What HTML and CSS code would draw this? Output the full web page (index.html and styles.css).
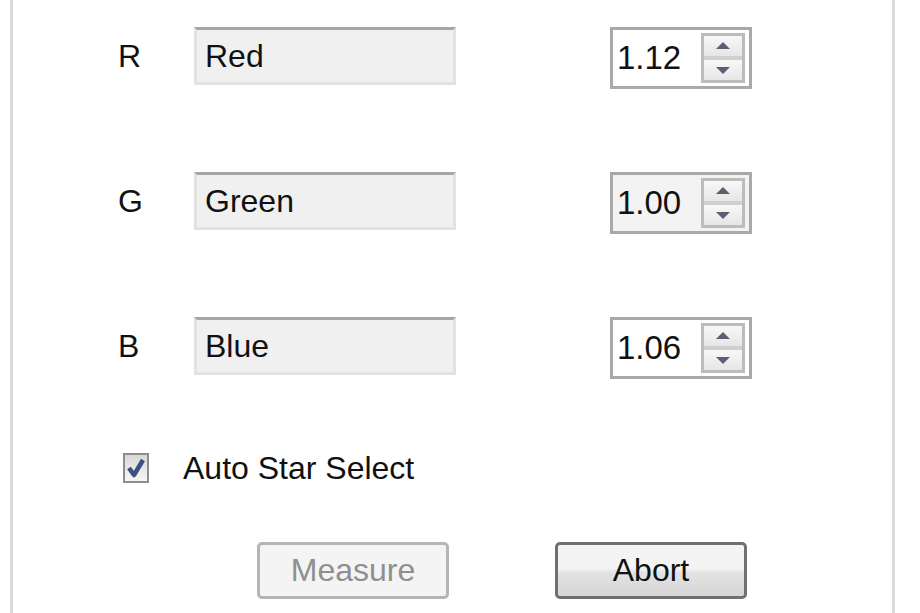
FILE: index.html
```html
<!DOCTYPE html>
<html lang="en">
<head>
  <meta charset="UTF-8" />
  <title>Color Balance</title>
  <link rel="stylesheet" href="styles.css">
</head>
<body>
  <div class="dialog">
    <!-- channel rows -->
    <div class="row">
      <span class="label">R</span>
      <div class="textbox">Red</div>
      <div class="spinner">
        <span class="value">1.12</span>
        <div class="spin"><span class="up"></span><span class="down"></span></div>
      </div>
    </div>
    <div class="row">
      <span class="label">G</span>
      <div class="textbox">Green</div>
      <div class="spinner focused">
        <span class="value">1.00</span>
        <div class="spin"><span class="up"></span><span class="down"></span></div>
      </div>
    </div>
    <div class="row">
      <span class="label">B</span>
      <div class="textbox">Blue</div>
      <div class="spinner">
        <span class="value">1.06</span>
        <div class="spin"><span class="up"></span><span class="down"></span></div>
      </div>
    </div>

    <label class="check">
      <span class="box">
        <svg width="20" height="22" viewBox="0 0 20 22"><path d="M3 11 L8 18 L17 3" fill="none" stroke="#3f4f80" stroke-width="4.5" stroke-linejoin="round"/></svg>
      </span>
      Auto Star Select
    </label>

    <div class="buttons">
      <button class="btn disabled">Measure</button>
      <button class="btn">Abort</button>
    </div>
  </div>
</body>
</html>
```

FILE: styles.css
```css
body {
  margin: 0;
  background: #ffffff;
  font-family: "Liberation Sans", Arial, sans-serif;
  font-size: 32px;
  color: #111111;
}

.dialog {
  margin-left: 10px;
  width: 885px;
  height: 613px;
  box-sizing: border-box;
  border-left: 3px solid #dadada;
  border-right: 3px solid #dadada;
  padding-top: 27px;
  overflow: hidden;
}

.row {
  display: flex;
  align-items: flex-start;
  height: 62px;
  margin-bottom: 83px;
  padding-left: 105px;
}

.label {
  width: 76px;
  height: 58px;
  line-height: 58px;
}

.textbox {
  width: 262px;
  height: 58px;
  box-sizing: border-box;
  border: 3px solid #e2e2e2;
  border-top-color: #a6a6a6;
  background: #f0f0f0;
  padding-left: 8px;
  line-height: 52px;
}

.spinner {
  margin-left: 154px;
  width: 142px;
  height: 62px;
  box-sizing: border-box;
  border: 3px solid #a9a9a9;
  background: #ffffff;
  display: flex;
  align-items: center;
  justify-content: space-between;
  padding: 0 4px 0 4px;
}

.spinner.focused {
  background: #f3f3f3;
}

.value {
  font-size: 33px;
}

.spin {
  width: 44px;
  height: 50px;
  box-sizing: border-box;
  border: 3px solid #bcbcbc;
  display: flex;
  flex-direction: column;
}

.spin span {
  flex: 1;
  position: relative;
  background: linear-gradient(#f8f8f8, #e6e6e6);
}

.spin .up {
  border-bottom: 4px solid #cfcfcf;
}

.spin span::after {
  content: "";
  position: absolute;
  left: 50%;
  top: 50%;
  margin-left: -7px;
  border-left: 7px solid transparent;
  border-right: 7px solid transparent;
}

.spin .up::after {
  margin-top: -4px;
  border-bottom: 7px solid #5a6070;
}

.spin .down::after {
  margin-top: -3px;
  border-top: 7px solid #5a6070;
}

.check {
  display: flex;
  align-items: center;
  margin-top: -10px;
  padding-left: 110px;
  height: 32px;
}

.box {
  width: 26px;
  height: 30px;
  box-sizing: border-box;
  border: 2px solid #8e8e8e;
  background: linear-gradient(#d8d8d8, #f6f6f6);
  display: flex;
  align-items: center;
  justify-content: center;
  margin-right: 34px;
}

.buttons {
  display: flex;
  gap: 106px;
  margin-top: 58px;
  padding-left: 244px;
}

.btn {
  width: 192px;
  height: 57px;
  font-family: "Liberation Sans", Arial, sans-serif;
  font-size: 32px;
  color: #111111;
  border: 3px solid #707070;
  border-radius: 5px;
  background: linear-gradient(#f4f4f4 45%, #e2e2e2 55%, #d6d6d6);
  padding: 0;
}

.btn.disabled {
  color: #8f8f8f;
  border-color: #b5b5b5;
  background: #f4f4f4;
}
```
